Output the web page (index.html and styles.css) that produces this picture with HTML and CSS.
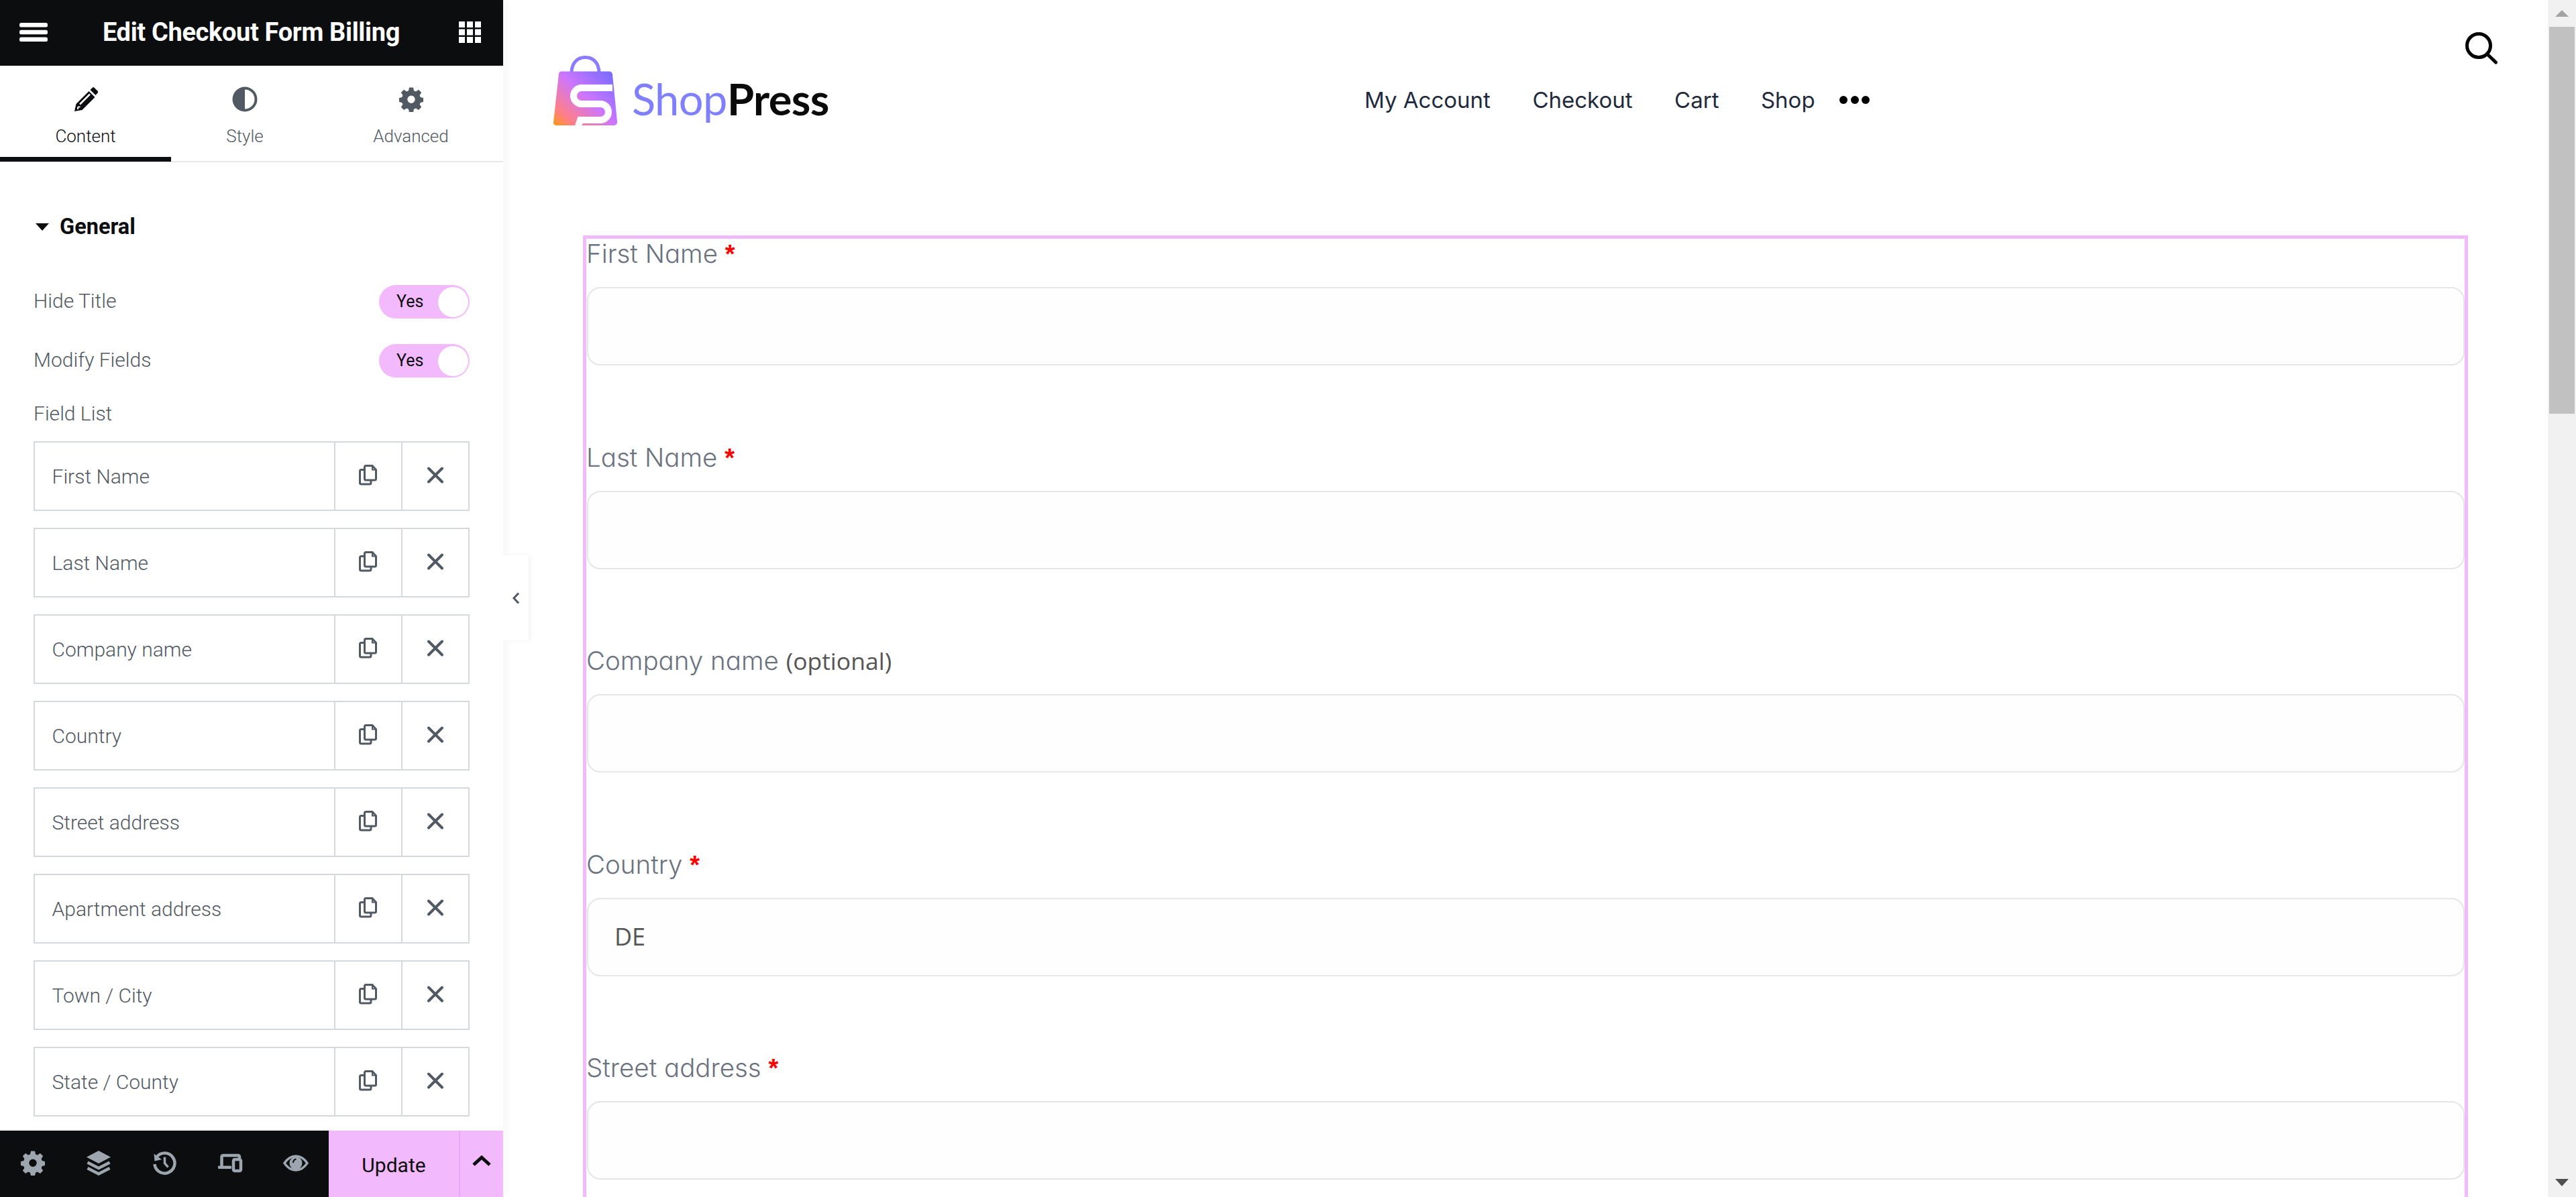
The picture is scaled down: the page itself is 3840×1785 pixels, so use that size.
FILE: index.html
```html
<!DOCTYPE html>
<html lang="en">
<head>
<meta charset="utf-8">
<title>Edit Checkout Form Billing</title>
<link rel="stylesheet" href="styles.css">
</head>
<body>
<div class="app">
  <aside class="panel">
    <header class="panel-head">
      <svg class="ico-menu" viewBox="0 0 42 28"><rect y="0" width="42" height="6.500" rx="2.500"/><rect y="10.700" width="42" height="6.500" rx="2.500"/><rect y="21.500" width="42" height="6.500" rx="2.500"/></svg>
      <h1 class="panel-title">Edit Checkout Form Billing</h1>
      <svg class="ico-grid" viewBox="0 0 33 32"><rect width="9" height="9"/><rect x="12" width="9" height="9"/><rect x="24" width="9" height="9"/><rect y="11.500" width="9" height="9"/><rect x="12" y="11.500" width="9" height="9"/><rect x="24" y="11.500" width="9" height="9"/><rect y="23" width="9" height="9"/><rect x="12" y="23" width="9" height="9"/><rect x="24" y="23" width="9" height="9"/></svg>
    </header>
    <nav class="tabs">
      <div class="tab tab-active">
        <svg class="tab-ico" viewBox="0 0 36 38"><path class="f-dark" d="M1 37l2.500-11 19-19 9 9-19 19z"/><path class="f-dark" d="M24.500 5l3.300-3.300a2 2 0 0 1 2.800 0l5 5a2 2 0 0 1 0 2.800L32.500 13z"/><path class="s-white" d="M9 26.500l15-15"/><path class="s-white-thin" d="M6 30.500l0 3.500M6 30.500l3.500 0"/></svg>
        <span>Content</span>
      </div>
      <div class="tab">
        <svg class="tab-ico" viewBox="0 0 38 38"><circle class="f-grey" cx="19" cy="19" r="18.500"/><path class="f-white" d="M19 4.500a14.500 14.500 0 0 1 0 29z"/></svg>
        <span>Style</span>
      </div>
      <div class="tab">
        <svg class="tab-ico" viewBox="0 0 38 38"><use href="#gear" class="f-grey"/></svg>
        <span>Advanced</span>
      </div>
    </nav>
    <div class="panel-body">
      <div class="section-title"><i class="caret-down"></i><span>General</span></div>
      <div class="ctl ctl-first"><span>Hide Title</span><div class="switch"><b>Yes</b><i></i></div></div>
      <div class="ctl"><span>Modify Fields</span><div class="switch"><b>Yes</b><i></i></div></div>
      <div class="list-label">Field List</div>
      <ul class="rep">
        <li><span>First Name</span><button><svg class="ico-copy" viewBox="0 0 27 31"><use href="#copy"/></svg></button><button><svg class="ico-x" viewBox="0 0 26 25"><use href="#x"/></svg></button></li>
        <li><span>Last Name</span><button><svg class="ico-copy" viewBox="0 0 27 31"><use href="#copy"/></svg></button><button><svg class="ico-x" viewBox="0 0 26 25"><use href="#x"/></svg></button></li>
        <li><span>Company name</span><button><svg class="ico-copy" viewBox="0 0 27 31"><use href="#copy"/></svg></button><button><svg class="ico-x" viewBox="0 0 26 25"><use href="#x"/></svg></button></li>
        <li><span>Country</span><button><svg class="ico-copy" viewBox="0 0 27 31"><use href="#copy"/></svg></button><button><svg class="ico-x" viewBox="0 0 26 25"><use href="#x"/></svg></button></li>
        <li><span>Street address</span><button><svg class="ico-copy" viewBox="0 0 27 31"><use href="#copy"/></svg></button><button><svg class="ico-x" viewBox="0 0 26 25"><use href="#x"/></svg></button></li>
        <li><span>Apartment address</span><button><svg class="ico-copy" viewBox="0 0 27 31"><use href="#copy"/></svg></button><button><svg class="ico-x" viewBox="0 0 26 25"><use href="#x"/></svg></button></li>
        <li><span>Town / City</span><button><svg class="ico-copy" viewBox="0 0 27 31"><use href="#copy"/></svg></button><button><svg class="ico-x" viewBox="0 0 26 25"><use href="#x"/></svg></button></li>
        <li><span>State / County</span><button><svg class="ico-copy" viewBox="0 0 27 31"><use href="#copy"/></svg></button><button><svg class="ico-x" viewBox="0 0 26 25"><use href="#x"/></svg></button></li>
      </ul>
    </div>
    <footer class="panel-foot">
      <div class="foot-tools">
        <span class="tool"><svg viewBox="0 0 38 38"><use href="#gear"/></svg></span>
        <span class="tool"><svg viewBox="0 0 38 38"><path d="M19 1l18 9.500-18 9.500-18-9.500z"/><path class="s-tool" d="M2.500 18.500L19 27l16.500-8.500M2.500 27L19 35.500 35.500 27"/></svg></span>
        <span class="tool"><svg viewBox="0 0 38 38"><path class="s-tool" d="M7.500 10.500A15 15 0 1 1 4.500 21"/><path d="M3.500 5.500l1 11 10.500-2.500z"/><path class="s-tool-thin" d="M19.500 10.500v9l5 6"/></svg></span>
        <span class="tool"><svg viewBox="0 0 38 38"><path class="s-tool" d="M33 12v-2a2 2 0 0 0-2-2H8.500a2 2 0 0 0-2 2v14"/><rect x="1" y="23.500" width="20" height="4.500" rx="1"/><rect class="s-tool" x="24" y="14" width="11" height="17" rx="2"/></svg></span>
        <span class="tool"><svg viewBox="0 0 38 38"><path class="s-tool-thin" d="M2 19.500C7 12 13 9 19 9s12 3 17 10.500C31 27 25 30 19 30S7 27 2 19.500z"/><circle cx="19" cy="19.500" r="9.500"/><path class="s-dark-thin" d="M15 19c0-3 2-5 4.500-5.500"/></svg></span>
      </div>
      <button class="update">Update</button>
      <button class="update-more"><svg viewBox="0 0 30 16"><path d="M3 14L15 3l12 11"/></svg></button>
    </footer>
    <div class="collapse"><svg viewBox="0 0 12 18"><path d="M10 1.500L3 9l7 7.500"/></svg></div>
  </aside>

  <main class="site">
    <header class="site-head">
      <a class="logo">
        <svg class="logo-mark" viewBox="0 0 95 104">
          <defs><linearGradient id="bag" x1="0" y1="1" x2="1" y2="0.1"><stop offset="0" stop-color="#ff9d12"/><stop offset="0.18" stop-color="#ff7f84"/><stop offset="0.55" stop-color="#cc76ff"/><stop offset="1" stop-color="#766cff"/></linearGradient></defs>
          <path class="logo-handle" d="M27 24C28 10 36 2.500 47.500 2.500S67 10 68 24"/>
          <path fill="url(#bag)" d="M12 23.500H83a5 5 0 0 1 5 4.500l7 70a5 5 0 0 1-5 6H4a4 4 0 0 1-4-5L8 27a4 4 0 0 1 4-3.500z"/>
          <path class="logo-s" d="M88 48H42a12 12 0 0 0 0 24H70a9.500 9.500 0 0 1 0 24H40l-3 9"/>
        </svg>
        <span class="logo-text"><em>Shop</em>Press</span>
      </a>
      <nav class="menu">
        <a>My Account</a><a>Checkout</a><a>Cart</a><a>Shop</a>
        <span class="dots"><i></i><i></i><i></i></span>
      </nav>
      <svg class="search" viewBox="0 0 48 48"><circle cx="20" cy="20" r="17.500"/><path d="M33 33l12.500 12"/></svg>
    </header>
    <form class="billing">
      <div class="field"><label>First Name <abbr>*</abbr></label><div class="input"></div></div>
      <div class="field"><label>Last Name <abbr>*</abbr></label><div class="input"></div></div>
      <div class="field"><label>Company name <small>(optional)</small></label><div class="input"></div></div>
      <div class="field"><label>Country <abbr>*</abbr></label><div class="input">DE</div></div>
      <div class="field"><label>Street address <abbr>*</abbr></label><div class="input"></div></div>
    </form>
  </main>

  <div class="scrollbar">
    <i class="sb-up"></i>
    <div class="sb-thumb"></div>
    <i class="sb-down"></i>
  </div>
</div>

<svg class="defs" aria-hidden="true">
  <symbol id="gear" viewBox="0 0 38 38">
    <path d="M16 1.500h6l1 4.700 2.900 1.200 4-2.600 4.300 4.300-2.600 4 1.200 2.900 4.200.9v6.100l-4.200.9-1.200 2.900 2.600 4-4.300 4.300-4-2.600-2.900 1.200-1 4.700h-6l-1-4.700-2.900-1.200-4 2.600-4.300-4.300 2.600-4-1.200-2.900-4.200-.9v-6.100l4.200-.9 1.200-2.900-2.600-4 4.300-4.300 4 2.600 2.900-1.200zM19 13.500a5.700 5.700 0 1 0 0 11.400 5.700 5.700 0 0 0 0-11.400z" fill-rule="evenodd"/>
  </symbol>
  <symbol id="copy" viewBox="0 0 27 31">
    <path class="s-ico" d="M10.500 1.500H20l5.500 6v13.500a2 2 0 0 1-2 2h-13a2 2 0 0 1-2-2V3.500a2 2 0 0 1 2-2zM8 7.500H3.500a2 2 0 0 0-2 2V27a2 2 0 0 0 2 2H16a2 2 0 0 0 2-2v-4"/>
    <path class="s-ico-thin" d="M20 2v5.500h5"/>
  </symbol>
  <symbol id="x" viewBox="0 0 26 25">
    <path class="s-x" d="M3 2.500l20 20M23 2.500l-20 20"/>
  </symbol>
</svg>
</body>
</html>
```
FILE: styles.css
```css
* { box-sizing: border-box; }
html, body { margin: 0; padding: 0; height: 100%; background: #fff; overflow: hidden; }
h1, ul, li { margin: 0; padding: 0; list-style: none; }
button { border: 0; padding: 0; background: none; font: inherit; color: inherit; }
.defs { position: absolute; width: 0; height: 0; }

.app { display: flex; width: 3840px; height: 1785px; }

/* Editor panel */
.panel {
  position: relative; flex: 0 0 750px; display: flex; flex-direction: column; height: 1785px;
  background: #fff; box-shadow: 4px 0 14px rgba(0,0,0,.04);
  font-family: Roboto, "Liberation Sans", sans-serif; color: #515962; z-index: 2;
}
.panel-head {
  flex: 0 0 98px; display: flex; align-items: center; background: #0c0d0e; color: #fff; padding: 0 33px 3px 29px;
}
.ico-menu { width: 42px; height: 28px; fill: #fff; }
.ico-grid { width: 33px; height: 32px; fill: #fff; }
.panel-title { flex: 1; text-align: center; font-size: 38px; font-weight: 700; letter-spacing: -.35px; line-height: 60px; padding-left: 2px; padding-right: 8px; }

.tabs { flex: 0 0 144px; display: grid; grid-template-columns: 255px 220px 275px; border-bottom: 2.500px solid #e6e8ea; }
.tab { display: flex; flex-direction: column; align-items: center; padding-top: 31px; color: #515962; font-size: 26px; font-weight: 300; line-height: 30px; }
.tab span { margin-top: 21px; }
.tab-active { color: #0c0d0e; border-bottom: 7.500px solid #0c0d0e; margin-bottom: -0.500px; }
.tab-ico { width: 38px; height: 38px; }
.f-dark { fill: #0c0d0e; }
.f-grey { fill: #515962; }
.f-white { fill: #fff; }
.s-white { fill: none; stroke: #fff; stroke-width: 2.500; }
.s-white-thin { fill: none; stroke: #fff; stroke-width: 2; }

.panel-body { flex: 1; min-height: 0; padding: 0 50px; overflow: hidden; }
.section-title { display: flex; align-items: center; height: 40px; margin-top: 76px; font-size: 32.500px; font-weight: 700; color: #0c0d0e; }
.caret-down { width: 0; height: 0; margin: 0 16px 0 3px; border-left: 10px solid transparent; border-right: 10px solid transparent; border-top: 11px solid #0c0d0e; }
.ctl { display: flex; align-items: center; justify-content: space-between; height: 50px; font-size: 30px; font-weight: 300; margin-top: 38px; }
.ctl > span { position: relative; top: -2px; }
.ctl-first { margin-top: 67px; }
.list-label { font-size: 30px; font-weight: 300; line-height: 40px; margin-top: 34px; }
.switch { position: relative; width: 135px; height: 50px; border-radius: 25px; background: #f2b9fd; color: #0c0d0e; font-size: 25px; }
.switch b { position: absolute; left: 26px; top: 0; font-weight: 400; line-height: 50px; }
.switch i { position: absolute; right: 2.500px; top: 2.500px; width: 45px; height: 45px; border-radius: 50%; background: #fff; }

.rep { margin-top: 21px; }
.rep li { display: flex; height: 104px; margin-bottom: 25px; border: 2.500px solid #d5d8dc; }
.rep span { flex: 1; display: flex; align-items: center; padding: 1px 0 0 25.500px; font-size: 30px; font-weight: 300; }
.rep button { flex: 0 0 100px; display: flex; align-items: center; justify-content: center; border-left: 2.500px solid #d5d8dc; padding-bottom: 3px; }
.rep button + button { flex: 0 0 100.500px; }
.ico-copy { width: 27px; height: 31px; }
.ico-x { width: 26px; height: 25px; }
.s-ico { fill: none; stroke: #515962; stroke-width: 3; }
.s-ico-thin { fill: none; stroke: #515962; stroke-width: 2; }
.s-x { fill: none; stroke: #515962; stroke-width: 4; stroke-linecap: round; }

.panel-foot { flex: 0 0 99px; height: 99px; display: flex; background: #0c0d0e; }
.foot-tools { flex: 0 0 489px; display: flex; }
.tool { flex: 0 0 98px; display: flex; align-items: center; justify-content: center; padding-bottom: 3px; }
.tool svg { width: 38px; height: 38px; fill: #9da5ae; }
.s-tool { fill: none; stroke: #9da5ae; stroke-width: 4.500; }
.s-tool-thin { fill: none; stroke: #9da5ae; stroke-width: 3.500; }
.s-dark-thin { fill: none; stroke: #0c0d0e; stroke-width: 2; }
.update { flex: 1; background: #f2b9fd; color: #0c0d0e; font-size: 30px; font-weight: 400; line-height: 95px; padding-top: 4px; }
.update-more { flex: 0 0 66px; background: #f2b9fd; border-left: 2.500px solid #eaa9f6; display: flex; align-items: center; justify-content: center; padding-bottom: 9px; }
.update-more svg { width: 30px; height: 16px; fill: none; stroke: #0c0d0e; stroke-width: 5; }

.collapse {
  position: absolute; left: 750px; top: 828px; width: 38px; height: 127px; background: #fff;
  box-shadow: 3px 0 6px rgba(0,0,0,.05); display: flex; align-items: center; justify-content: center;
}
.collapse svg { width: 12px; height: 18px; fill: none; stroke: #515962; stroke-width: 3; }

/* Site preview */
.site { flex: 1; min-width: 0; overflow: hidden; font-family: Inter, "Liberation Sans", sans-serif; }
.site-head { display: flex; align-items: flex-start; height: 351px; }
.logo { display: flex; align-items: flex-start; margin: 83px 0 0 75px; width: 408px; }
.logo-mark { flex: 0 0 95px; width: 95px; height: 104px; filter: blur(.5px); }
.logo-handle { fill: none; stroke: #8a7bff; stroke-width: 5; }
.logo-s { fill: none; stroke: #fff; stroke-width: 10; }
.logo-text { margin: 24px 0 0 22px; font-family: Lato, sans-serif; font-size: 65px; font-weight: 700; line-height: 80px; letter-spacing: -.6px; color: #0a0a0a; filter: blur(.6px); }
.logo-text em { font-style: normal; font-weight: 400; color: #8080ff; }
.menu { display: flex; align-items: center; margin: 124px 0 0 801px; gap: 62.500px; height: 50px; font-size: 33px; color: #1f2a3d; }
.dots { display: flex; gap: 4.500px; margin-left: -26px; }
.dots i { width: 12px; height: 12px; border-radius: 50%; background: #000; }
.search { flex: 0 0 48px; width: 48px; height: 48px; margin: 48px 75px 0 auto; fill: none; stroke: #000; stroke-width: 5; stroke-linecap: round; }

.billing { margin-left: 119px; width: 2810px; border: 5px solid #f2b9fd; border-bottom: 0; min-height: 1440px; background: #fff; }
.field { height: 303.500px; }
.field label { display: block; height: 72px; line-height: 45px; font-size: 38.500px; font-weight: 300; color: #6b7280; font-feature-settings: "cv11"; }
.field abbr { color: #f00; font-family: "Liberation Sans", sans-serif; font-weight: 700; font-size: 38px; }
.field small { font-family: "Open Sans", sans-serif; font-size: 35.500px; font-weight: 400; color: #555; font-feature-settings: normal; }
.input { height: 117px; margin-left: 1px; border: 2.500px solid #e6e6e6; border-radius: 20px; background: #fefefe; padding-left: 39px; line-height: 112px; font-family: "Open Sans", sans-serif; font-size: 36px; color: #555; }

/* Scrollbar */
.scrollbar { position: relative; flex: 0 0 42px; background: #f1f1f1; }
.sb-thumb { position: absolute; left: 2px; top: 40px; width: 38px; height: 577px; background: #c1c1c1; }
.sb-up, .sb-down { position: absolute; left: 11px; width: 0; height: 0; border-left: 10px solid transparent; border-right: 10px solid transparent; }
.sb-up { top: 15px; border-bottom: 10px solid #a3a3a3; }
.sb-down { top: 1758px; border-top: 11px solid #505050; }
```
